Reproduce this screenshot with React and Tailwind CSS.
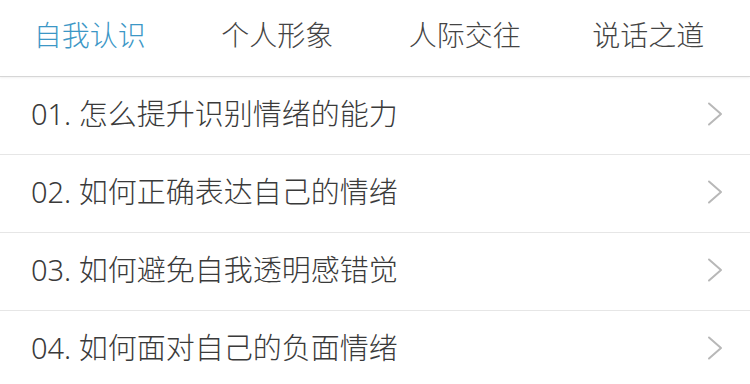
import React from "react";

const tabs = ["自我认识", "个人形象", "人际交往", "说话之道"];
const items = [
  "01. 怎么提升识别情绪的能力",
  "02. 如何正确表达自己的情绪",
  "03. 如何避免自我透明感错觉",
  "04. 如何面对自己的负面情绪",
];

function Chevron() {
  return (
    <svg width="16" height="24" viewBox="0 0 16 24" fill="none">
      <polyline points="2,1.5 14,12 2,22.5" stroke="#b8b8b8" strokeWidth="2" strokeLinecap="round" strokeLinejoin="round" />
    </svg>
  );
}

export default function App() {
  return (
    <div
      className="w-[750px] h-[384px] bg-white overflow-hidden"
      style={{ fontFamily: '"Noto Sans", "Noto Sans CJK SC", sans-serif' }}
    >
      <div className="h-[77px] grid grid-cols-4 items-center border-b border-[#d6d6d6] pb-[6px] shadow-[0_1px_2px_rgba(0,0,0,0.06)]">
        {tabs.map((t, i) => (
          <div
            key={t}
            className={`text-center text-[28px] leading-none font-light ${i === 0 ? "text-[#3c97c6] pr-2" : "text-[#444444]"} ${i === 1 || i === 2 ? "pr-2" : ""} ${i === 3 ? "pr-4" : ""}`}
          >
            {t}
          </div>
        ))}
      </div>
      {items.map((it) => (
        <div
          key={it}
          className="h-[78px] flex items-center justify-between pl-[31px] pr-[27px] pb-1 border-b border-[#e6e6e6]"
        >
          <span className="text-[29px] leading-none font-light text-[#3a3a3a]">{it}</span>
          <Chevron />
        </div>
      ))}
    </div>
  );
}
